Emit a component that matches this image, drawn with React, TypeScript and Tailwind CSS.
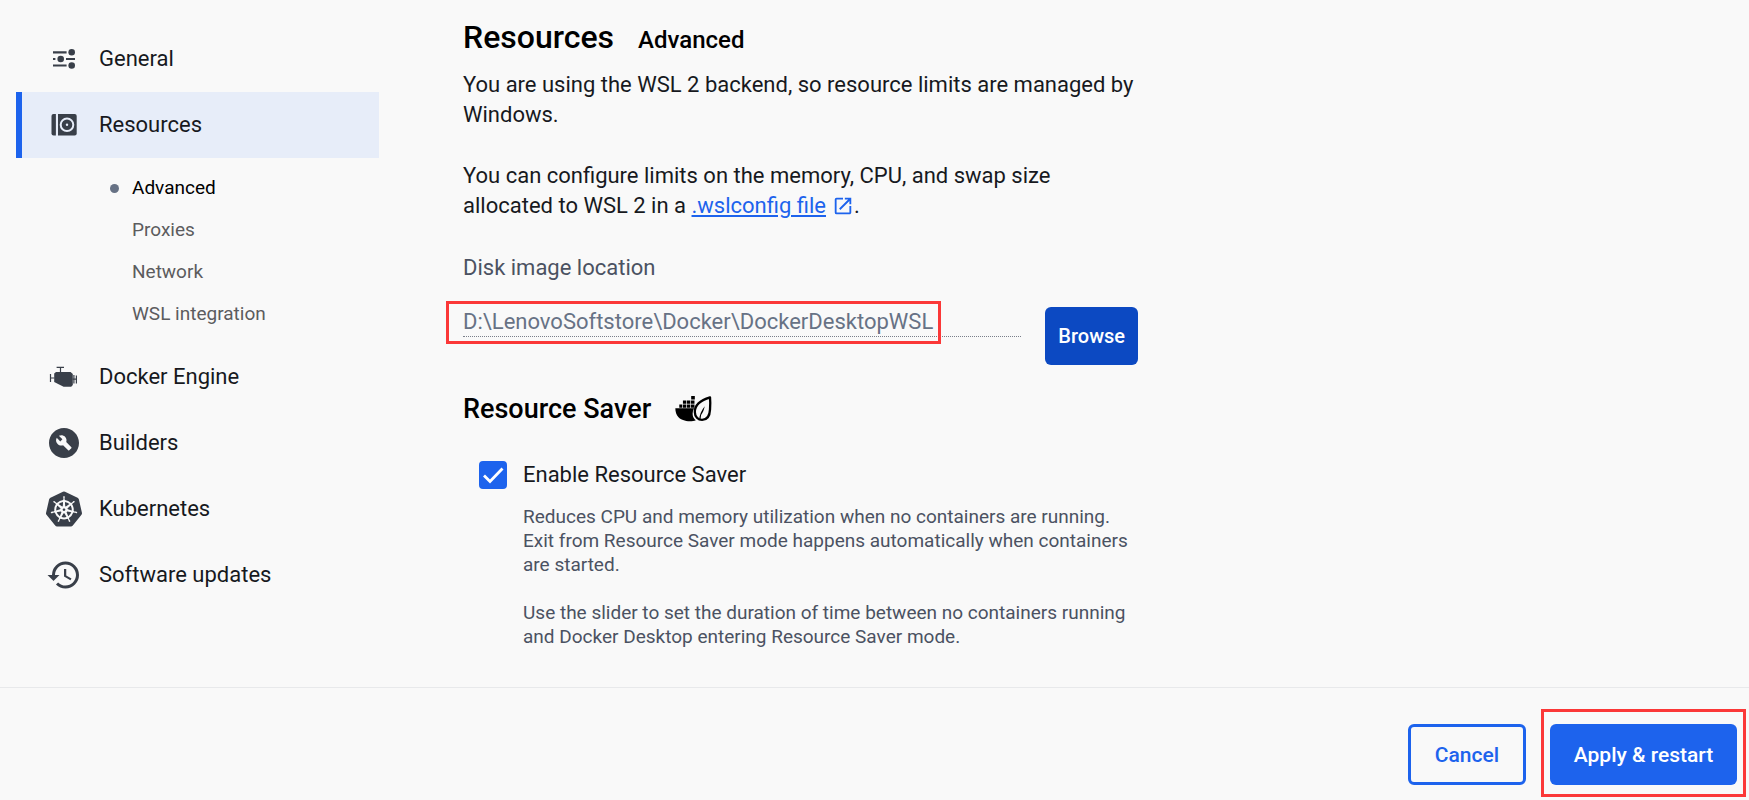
import type { ReactNode } from "react";
import { MdBuildCircle, MdHistory, MdOpenInNew } from "react-icons/md";
import { SiKubernetes } from "react-icons/si";

function SlidersIcon() {
  return (
    <svg viewBox="0 0 36 36" className="size-9" fill="currentColor" aria-hidden="true">
      <path d="M7 11.3H20.6M7 18H9.4M20 18H29M7 24.5H20.6" stroke="currentColor" strokeWidth="2.2" />
      <circle cx="25.7" cy="11.3" r="3.3" />
      <circle cx="14.7" cy="18" r="3.3" />
      <circle cx="25.7" cy="24.5" r="3.3" />
    </svg>
  );
}

function DiskIcon() {
  return (
    <svg viewBox="0 0 36 36" className="size-9" fill="currentColor" aria-hidden="true">
      <path d="M7.5 7H9.9V28.5H7.5A2 2 0 0 1 5.5 26.5V9A2 2 0 0 1 7.5 7Z" />
      <path d="M12 7H28.7A2 2 0 0 1 30.7 9V26.5A2 2 0 0 1 28.7 28.5H12Z" />
      <circle cx="21" cy="17.8" r="6.3" fill="none" stroke="#e7edf9" strokeWidth="2" />
      <circle cx="21" cy="17.8" r="1.2" fill="#e7edf9" />
    </svg>
  );
}

function EngineIcon() {
  return (
    <svg viewBox="0 0 36 36" className="size-9" fill="currentColor" aria-hidden="true">
      <path d="M10 13H24.6L26.8 15V26L25.2 27.8H17.6L8.2 23V14.6Z" />
      <path
        d="M10.6 8.3H18M14.5 8.3V13M4.5 15V23M4.5 19H8.5M27.9 16V24.5M30.4 16.5V24.5M26.5 20.2H30.4"
        fill="none"
        stroke="currentColor"
        strokeWidth="1.2"
      />
    </svg>
  );
}

function SaverIcon() {
  return (
    <svg viewBox="44 40 112 82" className="h-7 w-[37px]" aria-hidden="true">
      <path d="M57 67H66V77H57ZM68 67H78V77H68ZM80 67H90V77H80ZM92 67H103V77H92ZM68 55H78V65H68ZM80 55H90V65H80ZM92 55H103V65H92ZM93 42H104V52H93Z" />
      <path d="M45 79H102C94 94 97 108 107 115C100 118 88 119 78 117C58 115 45 101 45 79Z" />
      <path
        d="M150 46C130 52 104 64 104 90C104 104 114 114 126 114C141 114 149 103 150 83C151 68 151 56 150 46Z"
        fill="#f9f9f9"
        stroke="#000"
        strokeWidth="7"
        strokeLinejoin="round"
      />
      <path d="M117 114C118 99 124 86 134 73C131 87 128 93 123 99L121 114Z" />
    </svg>
  );
}

function NavItem({ icon, label, active = false }: { icon: ReactNode; label: string; active?: boolean }) {
  return (
    <a
      href="#"
      aria-current={active ? "page" : undefined}
      className={
        active
          ? "flex h-[66px] items-center gap-[17px] border-l-6 border-[#1d63ed] bg-[#e7edf9] pl-6"
          : "flex h-[66px] items-center gap-[17px] border-l-6 border-transparent pl-6"
      }
    >
      <span className="flex size-9 shrink-0 items-center justify-center text-[#393f49]">{icon}</span>
      <span>{label}</span>
    </a>
  );
}

const subItems = ["Advanced", "Proxies", "Network", "WSL integration"];

export default function App() {
  return (
    <div className="flex min-h-screen flex-col bg-[#f9f9f9] font-[Roboto,sans-serif] text-[22px] leading-[30px] text-[#17191e]">
      <div className="flex flex-1 gap-[84px] pl-4">
        <nav aria-label="Settings" className="w-[363px] shrink-0 pt-[26px]">
          <NavItem icon={<SlidersIcon />} label="General" />
          <NavItem icon={<DiskIcon />} label="Resources" active />
          <ul className="py-[9px] pl-[94px] text-[19px]">
            {subItems.map((item, i) => (
              <li key={item}>
                <a href="#" className="flex h-[42px] items-center gap-[13px]">
                  <span className={i === 0 ? "size-[9px] rounded-full bg-[#677285]" : "size-[9px]"} />
                  <span className={i === 0 ? "text-black" : "text-[#5c5c5e]"}>{item}</span>
                </a>
              </li>
            ))}
          </ul>
          <NavItem icon={<EngineIcon />} label="Docker Engine" />
          <NavItem icon={<MdBuildCircle className="size-9" />} label="Builders" />
          <NavItem icon={<SiKubernetes className="size-9" />} label="Kubernetes" />
          <NavItem icon={<MdHistory className="size-9" />} label="Software updates" />
        </nav>

        <main className="max-w-[675px] flex-1 pt-4">
          <div className="flex items-baseline gap-6 font-medium text-black">
            <h1 className="text-[32px] leading-[42px]">Resources</h1>
            <h2 className="text-[24px]">Advanced</h2>
          </div>
          <p className="mt-3">
            You are using the WSL 2 backend, so resource limits are managed by Windows.
          </p>
          <p className="mt-[31px] max-w-[620px]">
            You can configure limits on the memory, CPU, and swap size allocated to WSL 2 in a{" "}
            <a href="#" className="text-[#1d63ed] underline underline-offset-2">
              .wslconfig file
              <MdOpenInNew className="ml-[6px] inline size-[22px] align-[-4px]" />
            </a>
            .
          </p>
          <label htmlFor="disk-location" className="mt-8 block text-[#4b5262]">
            Disk image location
          </label>
          <div className="mt-6 flex items-start gap-6">
            <div className="relative flex-1">
              <input
                id="disk-location"
                readOnly
                defaultValue="D:\LenovoSoftstore\Docker\DockerDesktopWSL"
                className="block h-[30px] w-full border-b border-dotted border-[#7a7f8a] bg-transparent text-[#677285] outline-none"
              />
              <span className="pointer-events-none absolute -top-[6px] -left-[17px] h-[43px] w-[495px] border-3 border-[#fb3838]" />
            </div>
            <button type="button" className="h-[58px] rounded-md bg-[#0c49c2] px-[13px] text-[20px] font-medium text-white">
              Browse
            </button>
          </div>
          <div className="mt-[29px] flex items-center gap-6">
            <h2 className="text-[27px] font-medium text-black">Resource Saver</h2>
            <SaverIcon />
          </div>
          <div className="mt-9 flex gap-4 pl-4">
            <span className="relative mt-px size-7 shrink-0">
              <input
                id="saver"
                type="checkbox"
                defaultChecked
                className="block size-7 appearance-none rounded-sm border-2 border-[#1d63ed] checked:bg-[#1d63ed]"
              />
              <svg viewBox="0 0 28 28" className="pointer-events-none absolute inset-0 size-7" aria-hidden="true">
                <path d="M5 14.5L11 20.5L23.5 7.5" fill="none" stroke="#fff" strokeWidth="2.8" />
              </svg>
            </span>
            <div>
              <label htmlFor="saver" className="block">
                Enable Resource Saver
              </label>
              <div className="mt-[15px] text-[19px] leading-6 text-[#4b5262]">
                <p>
                  Reduces CPU and memory utilization when no containers are running. Exit from Resource Saver mode
                  happens automatically when containers are started.
                </p>
                <p className="mt-6">
                  Use the slider to set the duration of time between no containers running and Docker Desktop entering
                  Resource Saver mode.
                </p>
              </div>
            </div>
          </div>
        </main>
      </div>

      <footer className="flex h-[113px] shrink-0 items-start justify-end gap-6 border-t border-[#e8e9eb] pt-9 pr-3 text-[21px] font-medium">
        <button type="button" className="h-[61px] w-[118px] rounded-md border-3 border-[#1d63ed] text-[#1d63ed]">
          Cancel
        </button>
        <div className="relative">
          <button type="button" className="h-[61px] w-[187px] rounded-md bg-[#1d63ed] text-white">
            Apply &amp; restart
          </button>
          <span className="pointer-events-none absolute -inset-x-[9px] -top-[15px] -bottom-3 border-3 border-[#fb3838]" />
        </div>
      </footer>
    </div>
  );
}
